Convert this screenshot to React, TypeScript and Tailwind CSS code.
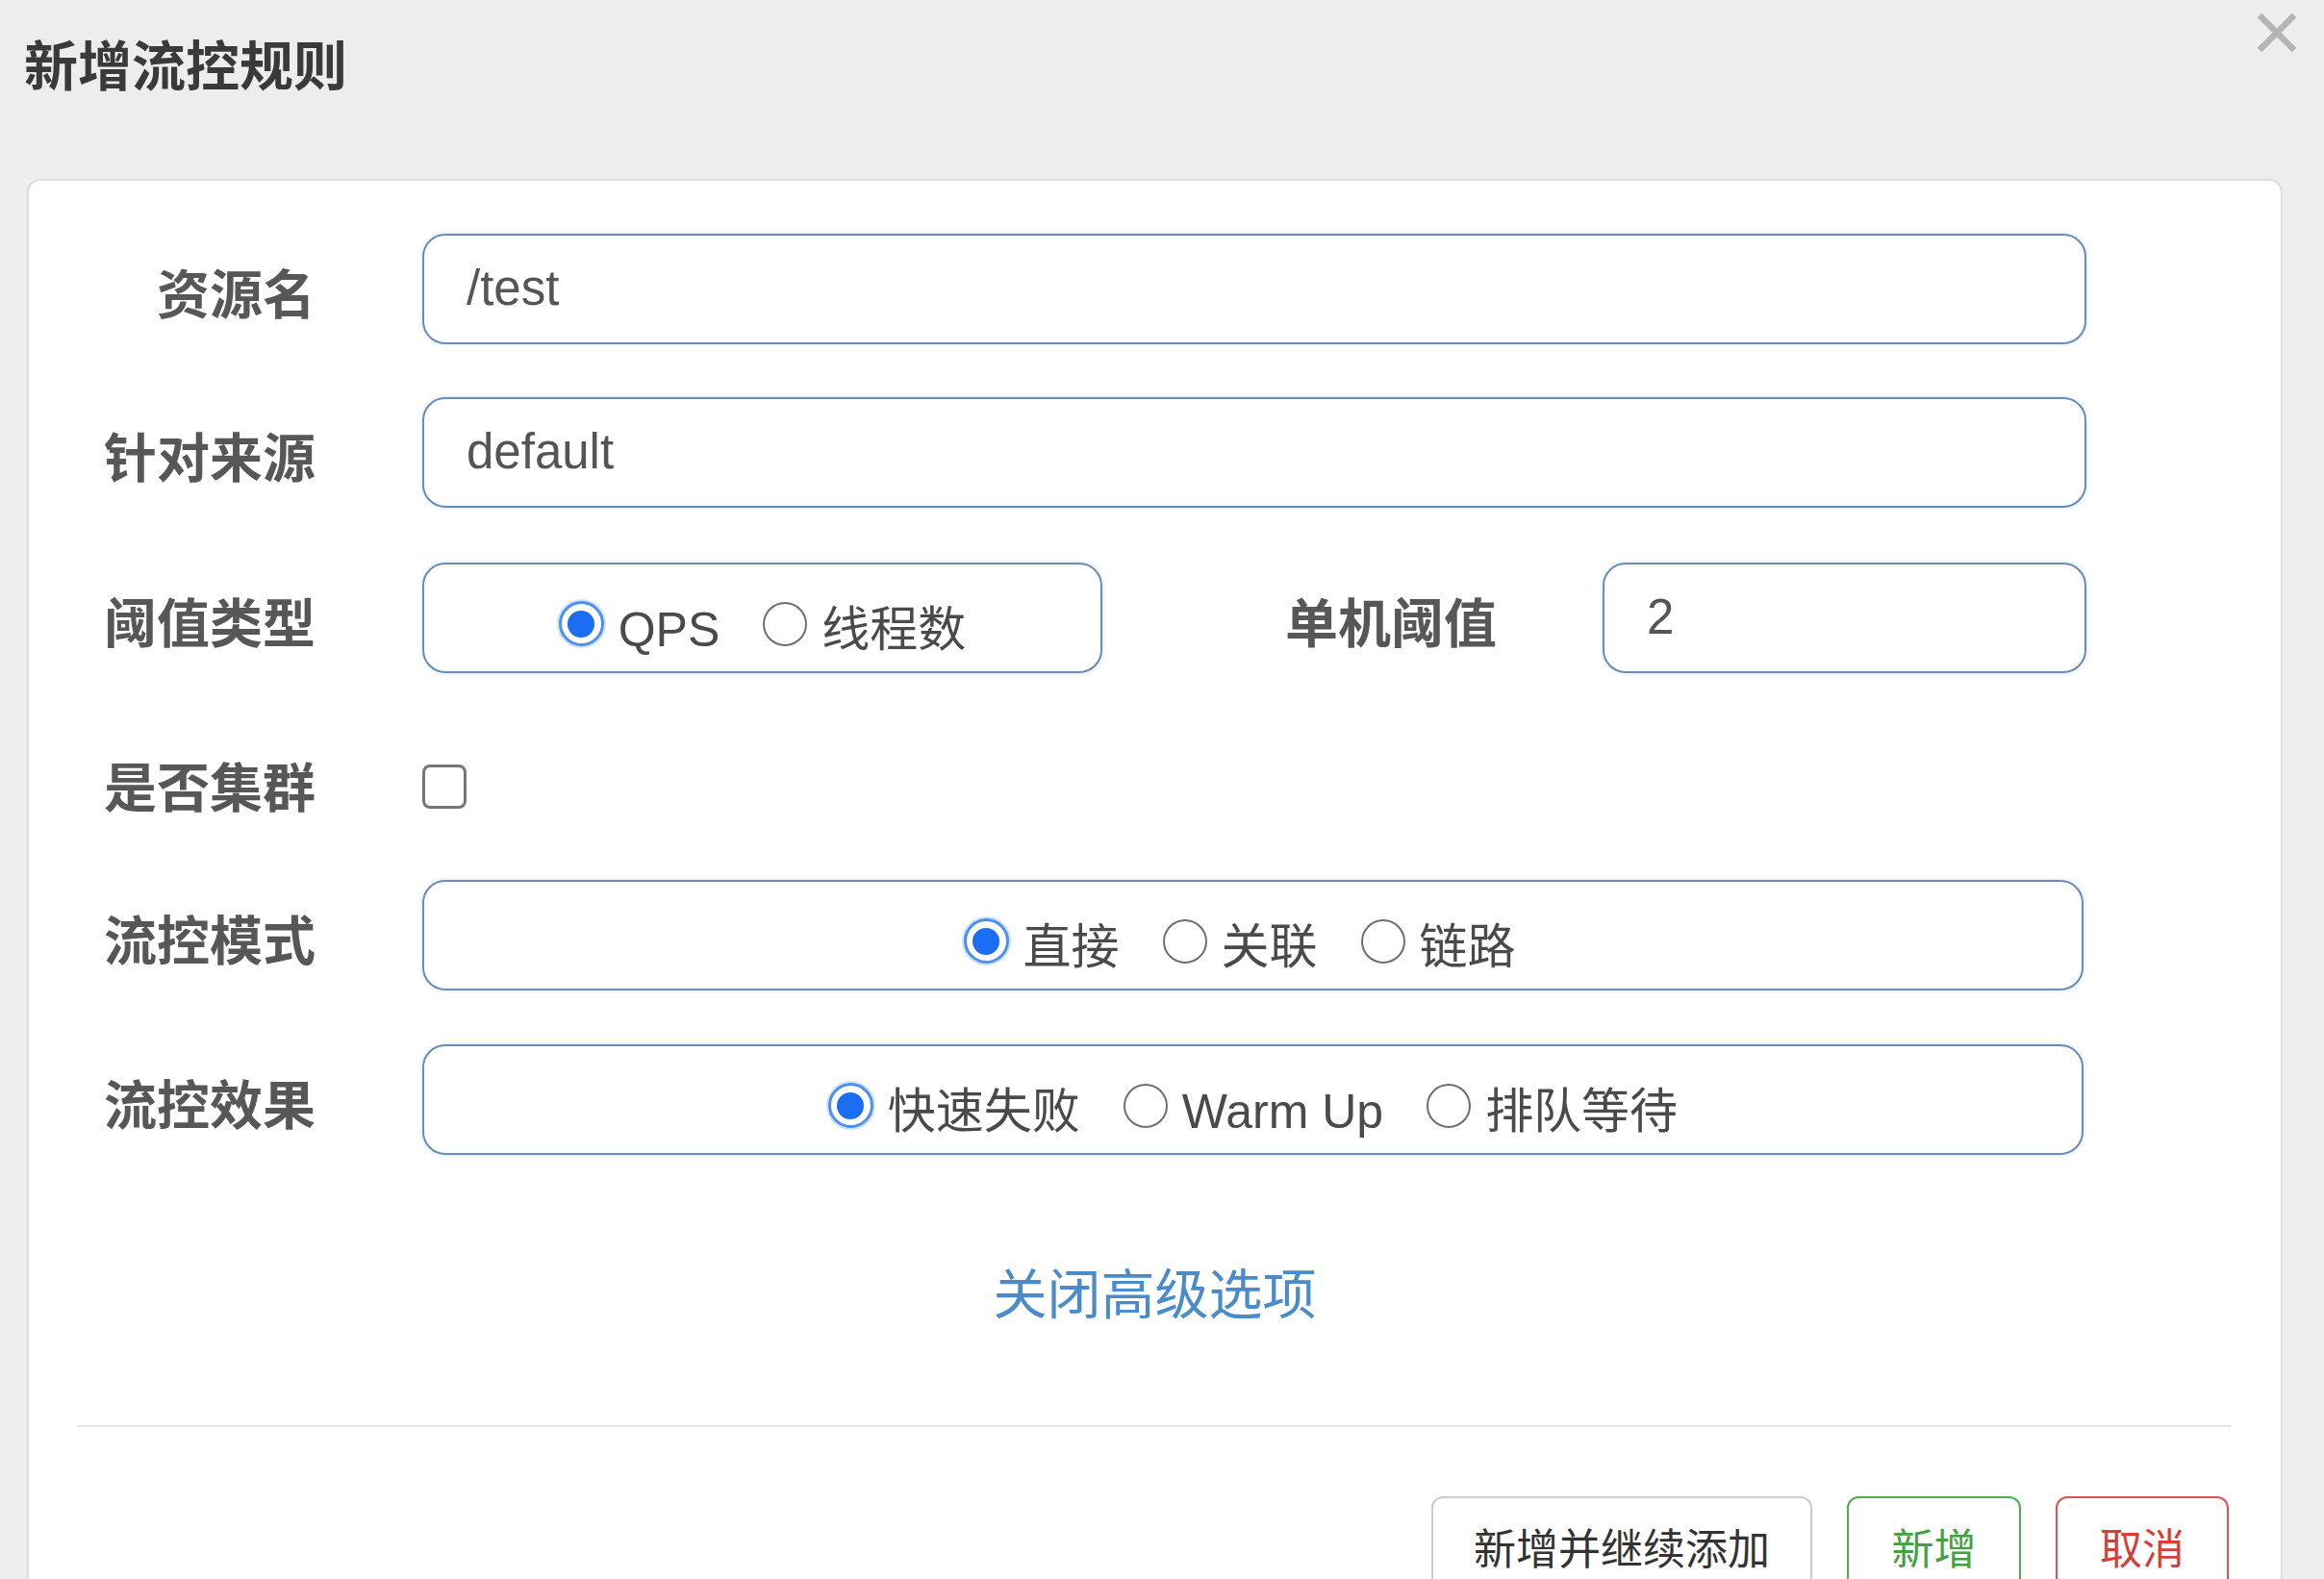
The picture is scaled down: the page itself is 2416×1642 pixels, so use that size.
import React from "react";

const FONT = "font-['Liberation_Sans','Noto_Sans_CJK_SC',sans-serif]";

function Radio({ checked, label }: { checked?: boolean; label: string }) {
  return (
    <label className="flex items-center gap-[15px]">
      {checked ? (
        <span className="flex h-[47px] w-[47px] items-center justify-center rounded-full border-[3px] border-[#4f8ff0] bg-white shadow-[0_0_0_2px_rgba(147,190,250,0.45)]">
          <span className="h-[28px] w-[28px] rounded-full bg-[#1b6ef3]" />
        </span>
      ) : (
        <span className="h-[46px] w-[46px] rounded-full border-[2px] border-[#6f6f6f] bg-white" />
      )}
      <span className="relative top-[6px] text-[50px] leading-none text-[#4a4a4a]">{label}</span>
    </label>
  );
}

function RadioBox({ options, className }: { options: { label: string; checked?: boolean }[]; className: string }) {
  return (
    <div
      className={`flex h-[115px] items-center justify-center gap-[45px] rounded-[24px] border-2 border-[#6a8cb5] bg-white pt-[12px] shadow-[0_0_5px_rgba(120,180,235,0.35)] ${className}`}
    >
      {options.map((o) => (
        <Radio key={o.label} label={o.label} checked={o.checked} />
      ))}
    </div>
  );
}

function TextBox({ value, className }: { value: string; className: string }) {
  return (
    <div
      className={`flex h-[115px] items-center rounded-[24px] border-2 border-[#6a8cb5] bg-white pl-[44px] text-[51px] text-[#555] shadow-[0_0_5px_rgba(120,180,235,0.35)] ${className}`}
    >
      {value}
    </div>
  );
}

function Label({ children, className = "w-[298px] pt-[14px]" }: { children: React.ReactNode; className?: string }) {
  return (
    <div className={`shrink-0 text-right text-[55px] font-bold leading-none text-[#575757] ${className}`}>
      {children}
    </div>
  );
}

export default function App() {
  return (
    <div className={`relative h-[1642px] w-[2416px] overflow-hidden bg-[#ededef] ${FONT}`}>
      {/* header */}
      <div className="h-[186px] pl-[25px] pt-[32px]">
        <h1 className="text-[56px] font-bold leading-[76px] text-[#3a3a3a]">新增流控规则</h1>
      </div>
      <button className="absolute right-[26px] top-[11px] h-[46px] w-[46px]">
        <svg viewBox="0 0 46 46" className="h-full w-full">
          <path d="M5 5 L41 41 M41 5 L5 41" stroke="#b4b4b4" strokeWidth="6.5" strokeLinecap="butt" />
        </svg>
      </button>

      {/* card */}
      <div className="ml-[28px] w-[2345px] rounded-[14px] border-2 border-[#dddddd] bg-white pb-[40px] pt-[55px]">
        <div className="flex items-center">
          <Label>资源名</Label>
          <TextBox value="/test" className="ml-[111px] w-[1730px]" />
        </div>

        <div className="mt-[55px] flex items-center">
          <Label>针对来源</Label>
          <TextBox value="default" className="ml-[111px] w-[1730px]" />
        </div>

        <div className="mt-[57px] flex items-center">
          <Label>阈值类型</Label>
          <RadioBox
            className="ml-[111px] w-[707px]"
            options={[{ label: "QPS", checked: true }, { label: "线程数" }]}
          />
          <Label className="w-[410px] pt-[14px]">单机阈值</Label>
          <TextBox value="2" className="ml-[110px] w-[503px]" />
        </div>

        <div className="mt-[60px] flex h-[115px] items-center">
          <Label className="w-[298px] pt-[6px]">是否集群</Label>
          <span className="ml-[111px] h-[46px] w-[46px] rounded-[8px] border-[3px] border-[#767676] bg-white" />
        </div>

        <div className="mt-[40px] flex items-center">
          <Label>流控模式</Label>
          <RadioBox
            className="ml-[111px] w-[1727px] pr-[28px]"
            options={[{ label: "直接", checked: true }, { label: "关联" }, { label: "链路" }]}
          />
        </div>

        <div className="mt-[56px] flex items-center">
          <Label>流控效果</Label>
          <RadioBox
            className="ml-[111px] w-[1727px]"
            options={[{ label: "快速失败", checked: true }, { label: "Warm Up" }, { label: "排队等待" }]}
          />
        </div>

        <div className="mt-[106px] text-center">
          <a className="text-[56px] leading-[80px] text-[#4a8bc9]">关闭高级选项</a>
        </div>

        <div className="ml-[50px] mr-[52px] mt-[95px] h-[2px] bg-[#e6e6e6]" />

        <div className="mr-[54px] mt-[72px] flex justify-end gap-[36px]">
          <button className="h-[112px] w-[396px] rounded-[12px] border-2 border-[#cccccc] bg-white text-[44px] text-[#333]">
            新增并继续添加
          </button>
          <button className="h-[112px] w-[181px] rounded-[12px] border-2 border-[#4cae4c] bg-white text-[44px] text-[#45a045]">
            新增
          </button>
          <button className="h-[112px] w-[180px] rounded-[12px] border-2 border-[#d9534f] bg-white text-[44px] text-[#d43f3a]">
            取消
          </button>
        </div>
      </div>
    </div>
  );
}
